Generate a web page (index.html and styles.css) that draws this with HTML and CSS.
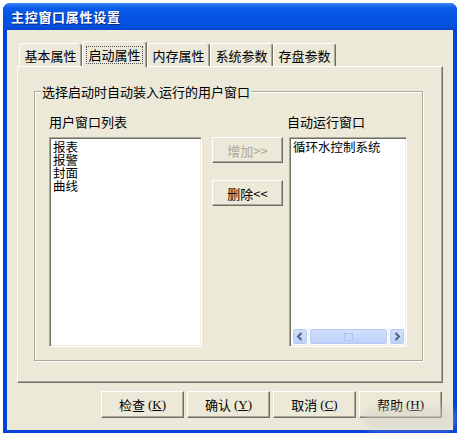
FILE: index.html
```html
<!DOCTYPE html>
<html lang="zh-CN">
<head>
    <meta charset="UTF-8">
    <title>主控窗口属性设置</title>
    <link rel="stylesheet" href="styles.css">
</head>
<body>
    <div class="window">
        <div class="titlebar">主控窗口属性设置</div>
        <div class="client">
            <div class="tabs">
                <div class="tab">基本属性</div>
                <div class="tab active"><span>启动属性</span></div>
                <div class="tab">内存属性</div>
                <div class="tab">系统参数</div>
                <div class="tab">存盘参数</div>
            </div>
            <div class="panel">
                <div class="group">
                    <div class="group-title">选择启动时自动装入运行的用户窗口</div>
                    <div class="columns">
                        <div class="col col-left">
                            <div class="col-label">用户窗口列表</div>
                            <div class="listbox">
                                <div class="list-item">报表</div>
                                <div class="list-item">报警</div>
                                <div class="list-item">封面</div>
                                <div class="list-item">曲线</div>
                            </div>
                        </div>
                        <div class="col col-buttons">
                            <div class="btn btn-small disabled">增加&gt;&gt;</div>
                            <div class="btn btn-small">删除&lt;&lt;</div>
                        </div>
                        <div class="col col-right">
                            <div class="col-label">自动运行窗口</div>
                            <div class="listbox">
                                <div class="list-items">
                                    <div class="list-item">循环水控制系统</div>
                                </div>
                                <div class="hscroll">
                                    <div class="sb-btn">
                                        <svg width="8" height="9" viewBox="0 0 8 9"><polyline points="5.5,1 2,4.5 5.5,8" fill="none" stroke="#4D6185" stroke-width="2"/></svg>
                                    </div>
                                    <div class="sb-thumb"><i></i></div>
                                    <div class="sb-btn">
                                        <svg width="8" height="9" viewBox="0 0 8 9"><polyline points="2.5,1 6,4.5 2.5,8" fill="none" stroke="#4D6185" stroke-width="2"/></svg>
                                    </div>
                                </div>
                            </div>
                        </div>
                    </div>
                </div>
            </div>
            <div class="footer">
                <div class="btn btn-wide">检查<span class="key">(<u>K</u>)</span></div>
                <div class="btn btn-wide">确认<span class="key">(<u>Y</u>)</span></div>
                <div class="btn btn-wide">取消<span class="key">(<u>C</u>)</span></div>
                <div class="btn btn-wide">帮助<span class="key">(<u>H</u>)</span></div>
            </div>
        </div>
        <div class="watermark"></div>
    </div>
</body>
</html>
```

FILE: styles.css
```css
body {
    margin: 0;
    background: #fff;
    font-family: "Noto Sans CJK SC", "Liberation Sans", sans-serif;
    font-size: 13px;
    color: #000;
}
.window {
    position: relative;
    margin: 3px 0 0 3px;
    width: 454px;
    height: 430px;
    background: #0842D8;
    border-radius: 7px 7px 0 0;
    display: flex;
    flex-direction: column;
}
.titlebar {
    height: 27px;
    display: flex;
    align-items: center;
    padding-left: 8px;
    color: #fff;
    font-weight: bold;
    font-size: 13px;
    letter-spacing: 0.7px;
    border-radius: 7px 7px 0 0;
    background: linear-gradient(#3C88F4, #0A5CE8 18%, #0553E3 55%, #0650DF 85%, #0843CF);
    text-shadow: 1px 1px #0A2A8A;
}
.client {
    flex: 1;
    margin: 0 4px 3px;
    background: #ECE9D8;
    padding: 11px 10px 0;
}
.tabs {
    display: flex;
    align-items: flex-end;
    height: 25px;
    margin-left: 2px;
    position: relative;
    z-index: 1;
}
.tab {
    box-sizing: border-box;
    width: 63px;
    height: 23px;
    border: 1px solid;
    border-color: #fff #716F64 transparent #fff;
    border-bottom: none;
    border-radius: 3px 3px 0 0;
    box-shadow: inset -1px 0 #ACA899;
    background: #ECE9D8;
    display: flex;
    align-items: center;
    justify-content: center;
}
.tab.active {
    width: 65px;
    height: 26px;
    margin-bottom: -1px;
}
.tab.active span {
    outline: 1px dotted #555;
    padding: 0 1px;
    line-height: 16px;
}
.panel {
    box-sizing: border-box;
    height: 317px;
    border: 1px solid;
    border-color: #fff #716F64 #716F64 #fff;
    box-shadow: inset -1px -1px #ACA899;
    padding: 24px 19px 21px 16px;
    display: flex;
    flex-direction: column;
}
.group {
    flex: 1;
    border: 1px solid #ACA899;
    box-shadow: 1px 1px 0 #fff, inset 1px 1px 0 #fff;
    padding: 0 13px 0 14px;
}
.group-title {
    width: fit-content;
    margin: -8px 0 0 -8px;
    padding: 0 1px;
    line-height: 15px;
    background: #ECE9D8;
}
.columns {
    display: flex;
    margin-top: 15px;
}
.col {
    display: flex;
    flex-direction: column;
}
.col-left {
    width: 153px;
    margin-right: 10px;
}
.col-buttons {
    width: 71px;
    margin-right: 6px;
    padding-top: 23px;
    gap: 17px;
}
.col-right {
    width: 118px;
}
.col-right .col-label {
    margin-left: -2px;
}
.col-label {
    line-height: 15px;
    margin-bottom: 8px;
}
.listbox {
    box-sizing: border-box;
    height: 210px;
    background: #fff;
    border: 1px solid;
    border-color: #ACA899 #fff #fff #ACA899;
    box-shadow: inset 1px 1px #716F64, inset -1px -1px #F1EFE2;
    padding: 2px 1px 1px 2px;
    display: flex;
    flex-direction: column;
}
.list-items {
    flex: 1;
}
.list-item {
    font-size: 12.5px;
    line-height: 13px;
    padding-left: 1px;
}
.hscroll {
    height: 17px;
    display: flex;
    gap: 1px;
    background: #F3F2EC;
}
.sb-btn,
.sb-thumb {
    box-sizing: border-box;
    border: 1px solid #fff;
    border-radius: 3px;
    background: linear-gradient(#D5E1FC, #BED0F8);
    box-shadow: inset 0 0 0 1px #B6C9F4;
    display: flex;
    align-items: center;
    justify-content: center;
}
.sb-btn {
    width: 16px;
}
.sb-thumb {
    flex: 1;
}
.sb-thumb i {
    width: 7px;
    height: 6px;
    border: 1px solid #AFC4F2;
    background: #C9D8FA;
}
.btn {
    box-sizing: border-box;
    border: 1px solid;
    border-color: #fff #716F64 #716F64 #fff;
    box-shadow: inset -1px -1px #ACA899;
    background: #ECE9D8;
    display: flex;
    align-items: center;
    justify-content: center;
}
.btn-small {
    height: 26px;
}
.disabled {
    color: #ACA899;
}
.footer {
    display: flex;
    justify-content: flex-end;
    gap: 3px;
    margin-top: 8px;
    padding-right: 1px;
}
.btn-wide {
    width: 83px;
    height: 27px;
}
.key {
    margin-left: 3px;
    font-family: "Liberation Serif", serif;
    font-size: 13px;
}
.watermark {
    position: absolute;
    left: 360px;
    top: 404px;
    width: 92px;
    height: 23px;
    border-radius: 10px;
    background: rgba(210, 208, 200, 0.45);
    filter: blur(3px);
}
```
